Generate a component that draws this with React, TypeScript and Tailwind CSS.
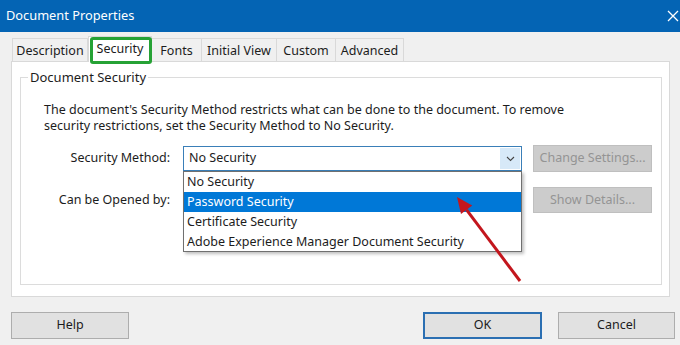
import React from 'react';

const tabs = [
  { label: 'Description', w: 'w-[76px]' },
  { label: 'Security', w: 'w-[64px]', active: true },
  { label: 'Fonts', w: 'w-[50px]' },
  { label: 'Initial View', w: 'w-[75px]' },
  { label: 'Custom', w: 'w-[59px]' },
  { label: 'Advanced', w: 'w-[68px]' },
];

const options = ['No Security', 'Password Security', 'Certificate Security', 'Adobe Experience Manager Document Security'];

const App: React.FC = () => {
  return (
    <div className="relative w-[680px] h-[345px] overflow-hidden bg-[#f0f0f0] text-[#1c1c1c] font-['Noto_Sans','Open_Sans',sans-serif] text-[12.5px] flex flex-col">
      {/* title bar */}
      <div className="h-[32px] bg-[#0464b4] flex items-center justify-between pl-[6px] pr-[1px] text-white">
        <span className="text-[12.8px]">Document Properties</span>
        <svg width="12" height="12" viewBox="0 0 12 12">
          <path d="M1 1L11 11M11 1L1 11" stroke="#fff" strokeWidth="1.3" />
        </svg>
      </div>

      <div className="flex-1 flex flex-col px-[11px] pt-[6px]">
        {/* tabs */}
        <div className="flex h-[23px] ml-[1px]">
          {tabs.map((t) =>
            t.active ? (
              <div key={t.label} className={`relative ${t.w} -mt-[2px] h-[26px] -mb-[1px] pb-[1px] bg-white border border-b-0 border-[#d9d9d9] flex items-center justify-center z-10`}>
                {t.label}
                <div className="absolute left-[1px] right-[-1px] top-[0px] bottom-[-2px] border-[3px] border-[#26a235] rounded-[3px]" />
              </div>
            ) : (
              <div key={t.label} className={`${t.w} h-full pt-[2px] bg-[#f0f0f0] border border-b-0 border-l-0 border-[#d9d9d9] first:border-l flex items-center justify-center`}>
                {t.label}
              </div>
            )
          )}
        </div>

        {/* panel */}
        <div className="w-[659px] h-[236px] bg-white border border-[#d9d9d9] pl-[8px] pr-[7px] pt-[6px] pb-[11px] flex">
          <fieldset className="flex-1 border border-[#dcdcdc] pl-[23px] pr-[8px]">
            <legend className="-ml-[16px] px-[2px] text-[13px] leading-[18px]">Document Security</legend>
            <p className="mt-[16px] leading-[16px]">
              The document's Security Method restricts what can be done to the document. To remove
              <br />
              security restrictions, set the Security Method to No Security.
            </p>

            <div className="mt-[11px] flex items-center">
              <div className="w-[126px] text-right">Security Method:</div>
              <div className="relative ml-[13px] w-[339px] h-[25px] border border-[#3a7fb8] bg-white flex items-center justify-between">
                <span className="pl-[5px]">No Security</span>
                <div className="mr-[1px] w-[20px] h-[21px] bg-[#d7e9f8] flex items-center justify-center">
                  <svg width="9" height="6" viewBox="0 0 9 6">
                    <path d="M1 1L4.5 4.5L8 1" fill="none" stroke="#444" strokeWidth="1.1" />
                  </svg>
                </div>

                {/* open list */}
                <div className="absolute left-[-1px] top-[24px] w-[339px] h-[81px] bg-white border border-[#707070] shadow-[2px_2px_3px_rgba(0,0,0,0.25)] z-20 flex flex-col">
                  {options.map((o, i) => (
                    <div
                      key={o}
                      className={`h-[20px] leading-[20px] pl-[3px] ${i === 1 ? 'bg-[#0078d7] text-white' : ''}`}
                    >
                      {o}
                    </div>
                  ))}
                </div>
              </div>
              <button className="ml-[11px] w-[119px] h-[27px] bg-[#cccccc] border border-[#bfbfbf] text-[#949494]">
                Change Settings...
              </button>
            </div>

            <div className="mt-[15px] flex items-center">
              <div className="w-[126px] text-right">Can be Opened by:</div>
              <div className="ml-[13px] w-[339px]" />
              <button className="ml-[11px] w-[119px] h-[26px] bg-[#cccccc] border border-[#bfbfbf] text-[#949494]">
                Show Details...
              </button>
            </div>
          </fieldset>
        </div>

        {/* footer buttons */}
        <div className="mt-[15px] w-[664px] flex">
          <button className="w-[118px] h-[27px] bg-[#e1e1e1] border border-[#adadad]">Help</button>
          <button className="ml-auto w-[119px] h-[27px] bg-[#e1e1e1] border-2 border-[#2b6fb2]">OK</button>
          <button className="ml-[16px] w-[117px] h-[27px] bg-[#e1e1e1] border border-[#adadad]">Cancel</button>
        </div>
      </div>

      {/* red annotation arrow */}
      <svg className="absolute inset-0 pointer-events-none z-30" width="680" height="345" viewBox="0 0 680 345">
        <line x1="520" y1="281" x2="466.6" y2="209.8" stroke="#c3161d" strokeWidth="3" />
        <polygon points="457,197 472.2,205.6 461,214" fill="#c3161d" />
      </svg>
    </div>
  );
};

export default App;
